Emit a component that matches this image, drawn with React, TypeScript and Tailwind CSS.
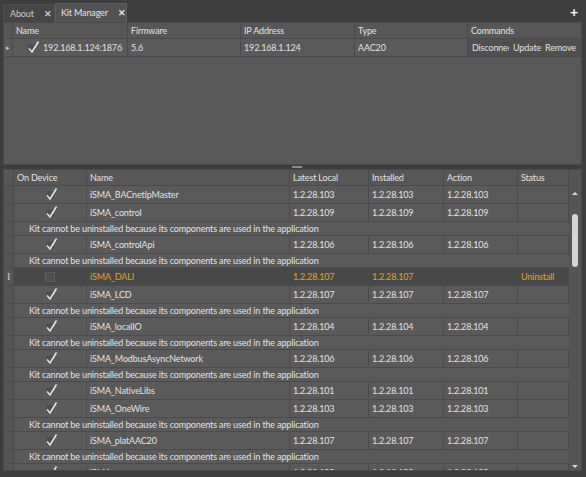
import React from 'react';

type Kit = {
  name: string;
  latest: string;
  installed: string;
  action: string;
  status?: string;
  checked: boolean;
  highlight?: boolean;
  locked?: boolean;
};

const kits: Kit[] = [
  { name: 'iSMA_BACnetIpMaster', latest: '1.2.28.103', installed: '1.2.28.103', action: '1.2.28.103', checked: true },
  { name: 'iSMA_control', latest: '1.2.28.109', installed: '1.2.28.109', action: '1.2.28.109', checked: true, locked: true },
  { name: 'iSMA_controlApi', latest: '1.2.28.106', installed: '1.2.28.106', action: '1.2.28.106', checked: true, locked: true },
  { name: 'iSMA_DALI', latest: '1.2.28.107', installed: '1.2.28.107', action: '', status: 'Uninstall', checked: false, highlight: true },
  { name: 'iSMA_LCD', latest: '1.2.28.107', installed: '1.2.28.107', action: '1.2.28.107', checked: true, locked: true },
  { name: 'iSMA_localIO', latest: '1.2.28.104', installed: '1.2.28.104', action: '1.2.28.104', checked: true, locked: true },
  { name: 'iSMA_ModbusAsyncNetwork', latest: '1.2.28.106', installed: '1.2.28.106', action: '1.2.28.106', checked: true, locked: true },
  { name: 'iSMA_NativeLibs', latest: '1.2.28.101', installed: '1.2.28.101', action: '1.2.28.101', checked: true },
  { name: 'iSMA_OneWire', latest: '1.2.28.103', installed: '1.2.28.103', action: '1.2.28.103', checked: true, locked: true },
  { name: 'iSMA_platAAC20', latest: '1.2.28.107', installed: '1.2.28.107', action: '1.2.28.107', checked: true, locked: true },
  { name: 'iSMA_sys', latest: '1.2.28.100', installed: '1.2.28.100', action: '1.2.28.100', checked: true },
];

function Check({ on }: { on: boolean }) {
  return (
    <div className="w-[10px] h-[10px] bg-[#4f4f4f] border border-[#5e5e5e] relative shrink-0">
      {on && (
        <svg className="absolute -left-[1px] -top-[4px]" width="13" height="14" viewBox="0 0 13 14">
          <path d="M2 8.5 L5 12 L11.5 1.5" fill="none" stroke="#e8e8e8" strokeWidth="1.5" strokeLinejoin="round" />
        </svg>
      )}
    </div>
  );
}

const cell = 'shrink-0 border-r border-[#4b4b4b] flex items-center px-[3px] whitespace-nowrap overflow-hidden';

export default function App() {
  return (
    <div
      className="w-[586px] h-[477px] bg-[#3d3d3d] flex flex-col text-[9px] tracking-[-0.15px] text-[#e2e2e2] overflow-hidden"
      style={{ fontFamily: 'Lato, "Open Sans", sans-serif' }}
    >
      {/* Tab bar */}
      <div className="h-[22px] flex items-end pl-[3px] pr-[8px] shrink-0">
        <div className="h-[18px] w-[52px] bg-[#464646] border border-b-0 border-[#4e4e4e] flex items-center pl-[6px] gap-[10px] text-[#c8c8c8]">
          <span>About</span>
          <span className="font-bold text-[9px]">✕</span>
        </div>
        <div className="h-[19px] w-[72px] bg-[#535353] border border-b-0 border-[#5f5f5f] flex items-center pl-[5px] gap-[10px]">
          <span>Kit Manager</span>
          <span className="font-bold text-[9px]">✕</span>
        </div>
        <div className="flex-1" />
        <div className="self-center text-[14px] font-bold text-white leading-none mt-[2px]">+</div>
      </div>

      <div className="flex-1 flex flex-col pl-[3px] pr-[4px] min-h-0">
        {/* Upper panel */}
        <div className="h-[143px] bg-[#585858] border border-[#4a4a4a] flex flex-col shrink-0">
          <div className="h-[16px] flex bg-[#575757] border-b border-[#4b4b4b]">
            <div className={`${cell} w-[9px] px-0`} />
            <div className={`${cell} w-[115px]`}>Name</div>
            <div className={`${cell} w-[113px]`}>Firmware</div>
            <div className={`${cell} w-[114px]`}>IP Address</div>
            <div className={`${cell} w-[113px]`}>Type</div>
            <div className={`${cell} flex-1 border-r-0`}>Commands</div>
          </div>
          <div className="h-[18px] flex bg-[#5a5a5a] border-b border-[#4b4b4b]">
            <div className={`${cell} w-[9px] px-0 justify-center text-[7px] text-[#d0d0d0]`}>▸</div>
            <div className={`${cell} w-[115px] gap-[6px] pl-[14px]`}>
              <Check on />
              <span>192.168.1.124:1876</span>
            </div>
            <div className={`${cell} w-[113px]`}>5.6</div>
            <div className={`${cell} w-[114px]`}>192.168.1.124</div>
            <div className={`${cell} w-[113px]`}>AAC20</div>
            <div className="flex-1 flex items-center bg-[#4f4f4f] pl-[4px] gap-[4px] whitespace-nowrap overflow-hidden">
              <span className="w-[37px] overflow-hidden shrink-0">Disconnect</span>
              <span>Update</span>
              <span>Remove</span>
            </div>
          </div>
        </div>

        {/* Splitter */}
        <div className="h-[4px] flex justify-center items-center shrink-0">
          <div className="w-[10px] h-[2px] bg-[#8a8a8a] ml-[8px]" />
        </div>

        {/* Lower panel */}
        <div className="flex-1 bg-[#555555] border border-[#4a4a4a] flex min-h-0 mb-[6px]">
          <div className="flex-1 flex flex-col overflow-hidden">
            <div className="h-[16px] flex bg-[#575757] border-b border-[#4b4b4b] shrink-0">
              <div className={`${cell} w-[10px] px-0`} />
              <div className={`${cell} w-[73px]`}>On Device</div>
              <div className={`${cell} w-[203px]`}>Name</div>
              <div className={`${cell} w-[79px]`}>Latest Local</div>
              <div className={`${cell} w-[75px]`}>Installed</div>
              <div className={`${cell} w-[74px]`}>Action</div>
              <div className={`${cell} w-[51px]`}>Status</div>
            </div>
            {kits.map((k) => (
              <React.Fragment key={k.name}>
                <div
                  className={`h-[18px] flex border-b border-[#4b4b4b] shrink-0 ${
                    k.highlight ? 'bg-[#484848] text-[#e5a21c]' : 'bg-[#5a5a5a]'
                  }`}
                >
                  <div className={`${cell} w-[10px] px-0 justify-center text-[#cfcfcf] bg-[#555555]`}>
                    {k.highlight ? (
                      <span className="text-[10px]" style={{ fontFamily: '"Liberation Serif", serif' }}>
                        I
                      </span>
                    ) : null}
                  </div>
                  <div className={`${cell} w-[73px] justify-center`}>
                    <Check on={k.checked} />
                  </div>
                  <div className={`${cell} w-[203px]`}>{k.name}</div>
                  <div className={`${cell} w-[79px]`}>{k.latest}</div>
                  <div className={`${cell} w-[75px]`}>{k.installed}</div>
                  <div className={`${cell} w-[74px]`}>{k.action}</div>
                  <div className={`${cell} w-[51px]`}>{k.status}</div>
                </div>
                {k.locked && (
                  <div className="h-[14px] flex items-center border-b border-[#4b4b4b] shrink-0 bg-[#5a5a5a] overflow-hidden">
                    <div className="w-[10px] h-full shrink-0 border-r border-[#4b4b4b] bg-[#555555]" />
                    <span className="ml-[15px] shrink-0 whitespace-nowrap">
                      Kit cannot be uninstalled because its components are used in the application
                    </span>
                  </div>
                )}
              </React.Fragment>
            ))}
          </div>

          {/* Scrollbar */}
          <div className="w-[12px] shrink-0 flex flex-col items-center pt-[22px] pb-[2px] bg-[#555555]">
            <div className="w-0 h-0 border-l-[3px] border-r-[3px] border-b-[3px] border-l-transparent border-r-transparent border-b-[#dcdcdc]" />
            <div className="w-[6px] h-[53px] rounded-[3px] bg-[#d4d4d4] mt-[19px]" />
            <div className="flex-1" />
            <div className="w-0 h-0 border-l-[3px] border-r-[3px] border-t-[3px] border-l-transparent border-r-transparent border-t-[#dcdcdc]" />
          </div>
        </div>
      </div>
    </div>
  );
}
